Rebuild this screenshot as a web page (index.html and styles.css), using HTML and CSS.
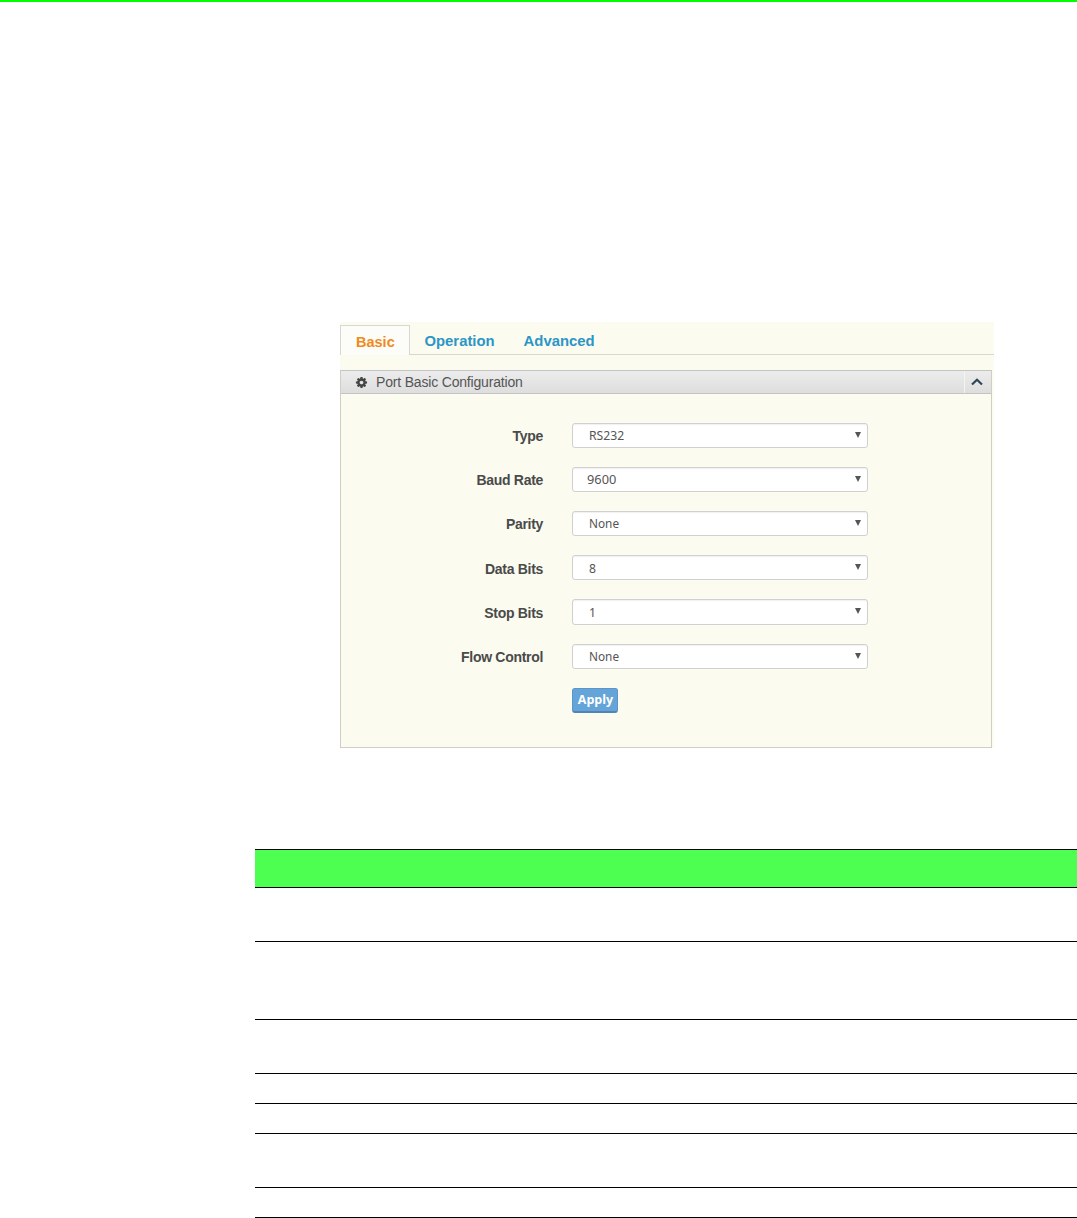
FILE: index.html
```html
<!DOCTYPE html>
<html lang="en">
<head>
<meta charset="utf-8">
<title>Port Basic Configuration</title>
<link rel="stylesheet" href="styles.css">
</head>
<body>
<div class="topbar"></div>
<main class="page">
  <section class="shot">
    <nav class="tabs">
      <a class="tab active">Basic</a>
      <a class="tab">Operation</a>
      <a class="tab">Advanced</a>
    </nav>
    <div class="panel">
      <header class="panel-head">
        <svg class="gear" viewBox="0 0 1792 1792"><path d="M1152 896q0-106-75-181t-181-75-181 75-75 181 75 181 181 75 181-75 75-181zm512-109v222q0 12-8 23t-20 13l-185 28q-19 54-39 91 35 50 107 138 10 12 10 25t-9 23q-27 37-99 108t-94 71q-12 0-26-9l-138-108q-44 23-91 38-16 136-29 186-7 28-36 28h-222q-14 0-24.500-8.500t-11.500-21.500l-28-184q-49-16-90-37l-141 107q-10 9-25 9-14 0-25-11-126-114-165-168-7-10-7-23 0-12 8-23 15-21 51-66.500t54-70.500q-27-50-41-99l-183-27q-13-2-21-12.500t-8-23.500v-222q0-12 8-23t19-13l186-28q14-46 39-92-40-57-107-138-10-12-10-24 0-10 9-23 26-36 98.500-107.500t94.500-71.500q13 0 26 10l138 107q44-23 91-38 16-136 29-186 7-28 36-28h222q14 0 24.500 8.500t11.500 21.500l28 184q49 16 90 37l142-107q9-9 24-9 13 0 25 10 129 119 165 170 7 8 7 22 0 12-8 23-15 21-51 66.500t-54 70.500q26 50 41 98l183 28q13 2 21 12.500t8 23.500z"/></svg>
        <span class="panel-title">Port Basic Configuration</span>
        <span class="collapse"><svg class="chevron" viewBox="0 0 12 8"><path d="M1 6.500 6 1.800l5 4.700"/></svg></span>
      </header>
      <form class="form">
        <label class="label">Type</label>
        <div class="field"><select class="select"><option>RS232</option></select></div>
        <label class="label">Baud Rate</label>
        <div class="field"><select class="select tight"><option>9600</option></select></div>
        <label class="label">Parity</label>
        <div class="field"><select class="select small"><option>None</option></select></div>
        <label class="label low">Data Bits</label>
        <div class="field"><select class="select low"><option>8</option></select></div>
        <label class="label low">Stop Bits</label>
        <div class="field"><select class="select"><option>1</option></select></div>
        <label class="label">Flow Control</label>
        <div class="field"><select class="select small"><option>None</option></select></div>
        <span></span>
        <div class="actions"><button type="button" class="apply">Apply</button></div>
      </form>
    </div>
  </section>
  <table class="spec">
    <thead><tr class="h38"><th></th></tr></thead>
    <tbody>
      <tr class="h54"><td></td></tr>
      <tr class="h78"><td></td></tr>
      <tr class="h54"><td></td></tr>
      <tr class="h30"><td></td></tr>
      <tr class="h30"><td></td></tr>
      <tr class="h54"><td></td></tr>
      <tr class="h30"><td></td></tr>
    </tbody>
  </table>
</main>
</body>
</html>
```
FILE: styles.css
```css
* { box-sizing: border-box; }
html, body { margin: 0; padding: 0; background: #fff; overflow: hidden; }
body { height: 1218px; font-family: "Liberation Sans", Arial, sans-serif; }
.topbar { height: 2px; background: #00ff00; }
.page { display: flow-root; }

.shot { width: 654px; height: 426px; margin: 320px 0 0 340px; background: #fbfbf0; padding-top: 3px; }
.tabs { display: flex; height: 30px; border-bottom: 1px solid #d8d8d0; }
.tab { height: 30px; font-size: 14.850px; font-weight: bold; color: #2b96c6; padding: 8px 14.500px 0; }
.tab.active { width: 70px; padding: 8px 0 0 15px; color: #f08a1c; background: #fcfcf8; border: 1px solid #d8d8d0; border-bottom: 0; font-size: 14.500px; }

.panel { width: 652px; height: 378px; margin-top: 15px; border: 1px solid #cfcfc4; border-top-color: #c4c4c4; }
.panel-head { display: flex; align-items: center; height: 23px; background: linear-gradient(#ececec, #dedede); border-bottom: 1px solid #c4c4c4; padding-left: 14px; }
.gear { width: 13px; height: 13px; fill: #444; }
.panel-title { margin-left: 8px; font-size: 14px; color: #555; letter-spacing: -0.180px; }
.collapse { display: flex; align-items: center; justify-content: center; margin-left: auto; width: 27px; height: 100%; padding-right: 2px; border-left: 1px solid #f4f4ec; }
.chevron { width: 12px; height: 8px; fill: none; stroke: #2f4658; stroke-width: 2.200px; }

.form { display: grid; grid-template-columns: 202px 296px; column-gap: 29px; row-gap: 19px; grid-template-rows: 25px 25px 25px 25px 26px 25px 25px; padding-top: 29px; }
.label { font-size: 14px; font-weight: bold; color: #4a4a4a; text-align: right; line-height: 27px; letter-spacing: -0.300px; }
.label.low { line-height: 29px; }
.field { position: relative; }
.field::after { content: ""; position: absolute; right: 7px; top: 9px; border: 3.500px solid transparent; border-top: 6px solid #555; border-bottom: 0; }
.select { appearance: none; -webkit-appearance: none; width: 100%; height: 100%; padding: 0 0 0 16px; border: 1px solid #d0d0d0; border-radius: 3px; background: #fff; font-family: "Noto Sans", sans-serif; font-size: 12.200px; color: #555; box-shadow: inset 0 1px 1px rgba(0,0,0,.06); }
.select.low { padding-top: 2px; }
.select.tight { padding-left: 14px; padding-bottom: 2px; font-size: 12.800px; }
.select.small { font-size: 11.800px; padding-bottom: 1px; }
.actions { display: flex; }
.apply { width: 46px; height: 25px; padding: 0 0 2px 1px; border: 1px solid #5b96c8; border-bottom: 2px solid #4f86b6; border-radius: 3px; background: #64a4d8; color: #fff; font-family: "Open Sans", sans-serif; font-size: 12.500px; font-weight: 700; }

.spec { width: 822px; margin: 101px 0 0 255px; border-collapse: collapse; table-layout: fixed; }
.spec tr { border-top: 1px solid #000; border-bottom: 1px solid #000; }
.spec th { background: #4cff50; padding: 0; }
.spec td { padding: 0; }
.h38 { height: 38px; }
.h54 { height: 54px; }
.h78 { height: 78px; }
.h30 { height: 30px; }
```
